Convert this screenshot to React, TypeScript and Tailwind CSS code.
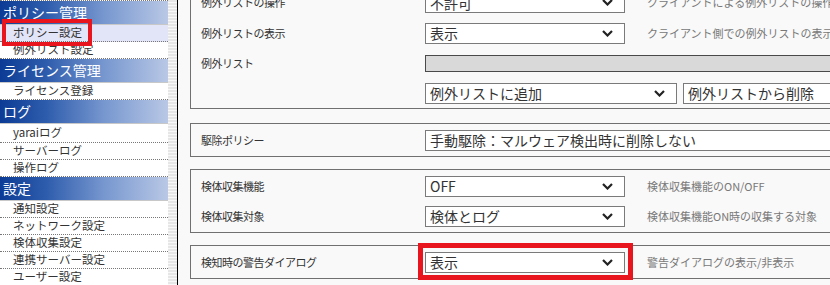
import type { ReactNode } from 'react'

interface NavItem {
	label: string
	active?: boolean
	tall?: boolean
}

interface NavGroup {
	title: string
	items: NavItem[]
}

const navGroups: NavGroup[] = [
	{ title: 'ポリシー管理', items: [{ label: 'ポリシー設定', active: true }, { label: '例外リスト設定' }] },
	{ title: 'ライセンス管理', items: [{ label: 'ライセンス登録' }] },
	{ title: 'ログ', items: [{ label: 'yaraiログ', tall: true }, { label: 'サーバーログ' }, { label: '操作ログ' }] },
	{
		title: '設定',
		items: [
			{ label: '通知設定' },
			{ label: 'ネットワーク設定' },
			{ label: '検体収集設定' },
			{ label: '連携サーバー設定' },
			{ label: 'ユーザー設定' },
		],
	},
]

function Chevron() {
	return (
		<svg width="11" height="7" viewBox="0 0 11 7" className="shrink-0">
			<path d="M1 1 L5.5 5.5 L10 1" fill="none" stroke="#222" strokeWidth="2.2" />
		</svg>
	)
}

function Select({ value, width, arrow = true }: { value: string; width: string; arrow?: boolean }) {
	return (
		<div
			className={`flex items-center h-[21px] shrink-0 border border-[#7a7a7a] bg-white pl-[4px] pr-[11px] text-[14px] text-[#333] ${width}`}
		>
			<span className="flex-1 leading-none whitespace-nowrap">{value}</span>
			{arrow && <Chevron />}
		</div>
	)
}

function Row({ label, children, desc, h = 'h-[30px]' }: { label?: string; children: ReactNode; desc?: string; h?: string }) {
	return (
		<div className={`flex items-center ${h}`}>
			<div className="w-[234px] shrink-0 pl-[10px] text-[11px] tracking-[-0.5px] text-[#333]">{label}</div>
			{children}
			{desc && (
				<div className="ml-[22px] whitespace-nowrap text-[11px] text-[#787878]">{desc}</div>
			)}
		</div>
	)
}

export default function App() {
	return (
		<div className="relative flex w-[830px] h-[285px] overflow-hidden bg-[#f9f9f9] font-['Noto_Sans_CJK_JP',sans-serif]">
			{/* Sidebar */}
			<div className="w-[168px] shrink-0 bg-white border-t border-dotted border-[#777]">
				{navGroups.map((group) => (
					<div key={group.title}>
						<div className="h-[24px] border-b border-[#c8c8c8] bg-[linear-gradient(to_right,#0b3b95_0%,#2f5dad_28%,#7797cf_62%,#b9c8e5_100%)] pl-[3px] text-[14px] leading-[23px] text-white">
							{group.title}
						</div>
						{group.items.map((item) => (
							<div
								key={item.label}
								className={`${item.tall ? 'h-[19px]' : 'h-[17px]'} flex items-center border-b border-dotted border-[#777] pl-[13px] text-[11.5px] text-[#333] ${item.active ? 'bg-[#e2e4f7]' : 'bg-white'}`}
							>
								{item.label}
							</div>
						))}
					</div>
				))}
			</div>

			{/* Gutter */}
			<div className="w-[9px] shrink-0 bg-[repeating-linear-gradient(to_bottom,#e6e6e6_0px,#e6e6e6_2px,#f8f8f8_2px,#f8f8f8_3px)]" />
			<div className="w-px shrink-0 bg-black" />

			{/* Main */}
			<div className="flex-1 overflow-hidden pl-[12px]">
				<div className="flex flex-col w-[720px]">
					<div className="mt-[-19px] border border-[#707070] pt-[5px]">
						<Row label="例外リストの操作" desc="クライアントによる例外リストの操作を許可" h="h-[31px]">
							<Select value="不許可" width="w-[200px]" />
						</Row>
						<Row label="例外リストの表示" desc="クライアント側での例外リストの表示/非表示">
							<Select value="表示" width="w-[200px]" />
						</Row>
						<Row label="例外リスト">
							<div className="h-[17px] flex-1 border border-[#4a4a4a] bg-[#d9d9d9]" />
						</Row>
						<Row label="">
							<Select value="例外リストに追加" width="w-[252px]" />
							<div className="ml-[6px] flex-1">
								<Select value="例外リストから削除" width="w-full" arrow={false} />
							</div>
						</Row>
					</div>

					<div className="mt-[14px] border border-[#707070]">
						<Row label="駆除ポリシー" h="h-[32px]">
							<div className="flex-1">
								<Select value="手動駆除：マルウェア検出時に削除しない" width="w-full" arrow={false} />
							</div>
						</Row>
					</div>

					<div className="mt-[12px] border border-[#707070] py-px">
						<Row label="検体収集機能" desc="検体収集機能のON/OFF">
							<Select value="OFF" width="w-[200px]" />
						</Row>
						<Row label="検体収集対象" desc="検体収集機能ON時の収集する対象">
							<Select value="検体とログ" width="w-[200px]" />
						</Row>
					</div>

					<div className="mt-[12px] border border-[#707070]">
						<Row label="検知時の警告ダイアログ" desc="警告ダイアログの表示/非表示" h="h-[32px]">
							<Select value="表示" width="w-[200px]" />
						</Row>
					</div>
				</div>
			</div>

			{/* Annotation boxes */}
			<div className="absolute left-[2px] top-[19px] w-[90px] h-[27px] border-4 border-[#e8141e]" />
			<div className="absolute left-[418px] top-[243px] w-[215px] h-[37px] border-[5px] border-[#e8141e]" />
		</div>
	)
}
